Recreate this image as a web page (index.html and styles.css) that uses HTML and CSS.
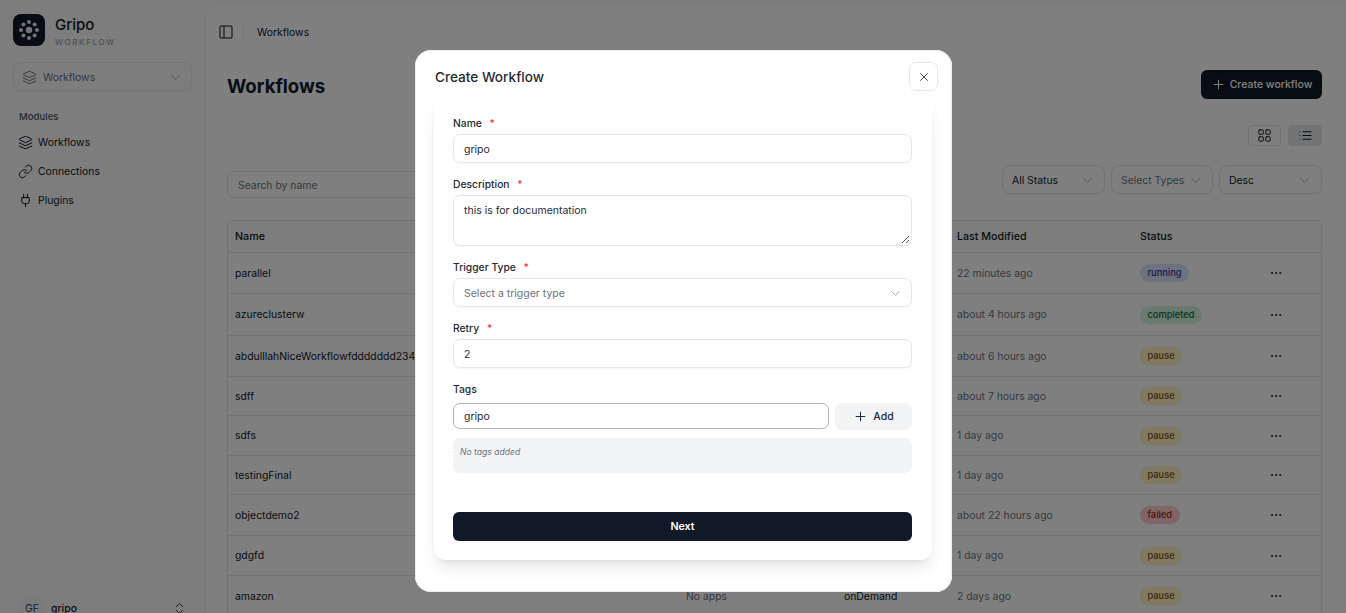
FILE: index.html
```html
<!DOCTYPE html>
<html lang="en">
  <head>
    <meta charset="UTF-8" />
    <meta name="viewport" content="width=device-width, initial-scale=1.0" />
    <link rel="stylesheet" href="styles.css">
    <title>Workflows</title>
  </head>
  <body>
    <svg class="sprite" aria-hidden="true">
      <symbol id="i-layers" viewBox="0 0 24 24"><path d="m12.83 2.18a2 2 0 0 0-1.66 0L2.6 6.08a1 1 0 0 0 0 1.83l8.58 3.91a2 2 0 0 0 1.66 0l8.58-3.9a1 1 0 0 0 0-1.83Z"/><path d="m22 17.65-9.17 4.16a2 2 0 0 1-1.66 0L2 17.65"/><path d="m22 12.65-9.17 4.16a2 2 0 0 1-1.66 0L2 12.65"/></symbol>
      <symbol id="i-link" viewBox="0 0 24 24"><path d="M10 13a5 5 0 0 0 7.54.54l3-3a5 5 0 0 0-7.07-7.07l-1.72 1.71"/><path d="M14 11a5 5 0 0 0-7.54-.54l-3 3a5 5 0 0 0 7.07 7.07l1.71-1.71"/></symbol>
      <symbol id="i-plug" viewBox="0 0 24 24"><path d="M12 22v-5"/><path d="M9 8V2"/><path d="M15 8V2"/><path d="M18 8v5a4 4 0 0 1-4 4h-4a4 4 0 0 1-4-4V8Z"/></symbol>
      <symbol id="i-panel" viewBox="0 0 24 24"><rect x="3" y="3" width="18" height="18" rx="2"/><path d="M9 3v18"/></symbol>
      <symbol id="i-grid" viewBox="0 0 24 24"><rect x="3" y="3" width="7" height="7" rx="1"/><rect x="14" y="3" width="7" height="7" rx="1"/><rect x="14" y="14" width="7" height="7" rx="1"/><rect x="3" y="14" width="7" height="7" rx="1"/></symbol>
      <symbol id="i-list" viewBox="0 0 24 24"><path d="M3 12h.01"/><path d="M3 18h.01"/><path d="M3 6h.01"/><path d="M8 12h13"/><path d="M8 18h13"/><path d="M8 6h13"/></symbol>
      <symbol id="i-plus" viewBox="0 0 24 24"><path d="M5 12h14"/><path d="M12 5v14"/></symbol>
      <symbol id="i-down" viewBox="0 0 24 24"><path d="m6 9 6 6 6-6"/></symbol>
      <symbol id="i-updown" viewBox="0 0 24 24"><path d="m7 15 5 5 5-5"/><path d="m7 9 5-5 5 5"/></symbol>
      <symbol id="i-dots" viewBox="0 0 24 24"><circle cx="12" cy="12" r="1"/><circle cx="19" cy="12" r="1"/><circle cx="5" cy="12" r="1"/></symbol>
      <symbol id="i-x" viewBox="0 0 24 24"><path d="M18 6 6 18"/><path d="m6 6 12 12"/></symbol>
    </svg>

    <div class="shell">
      <aside class="sidebar">
        <div class="brand">
          <div class="logo">
            <svg viewBox="0 0 32 32" width="32" height="32">
              <g fill="#e5e7eb">
                <circle cx="16" cy="16" r="3.2" />
                <circle cx="16" cy="8" r="2" />
                <circle cx="16" cy="24" r="2" />
                <circle cx="8" cy="16" r="2" />
                <circle cx="24" cy="16" r="2" />
                <circle cx="10.4" cy="10.4" r="2" />
                <circle cx="21.6" cy="10.4" r="2" />
                <circle cx="10.4" cy="21.6" r="2" />
                <circle cx="21.6" cy="21.6" r="2" />
              </g>
            </svg>
          </div>
          <div class="brand-text">
            <div class="brand-name">Gripo</div>
            <div class="brand-sub">WORKFLOW</div>
          </div>
        </div>
        <div class="module-select">
          <svg class="icon icon-15 muted"><use href="#i-layers" /></svg>
          <span>Workflows</span>
          <svg class="icon icon-15 chevron"><use href="#i-down" /></svg>
        </div>
        <nav class="nav">
          <p class="nav-title">Modules</p>
          <a class="nav-item"><svg class="icon icon-15"><use href="#i-layers" /></svg>Workflows</a>
          <a class="nav-item"><svg class="icon icon-15"><use href="#i-link" /></svg>Connections</a>
          <a class="nav-item"><svg class="icon icon-15"><use href="#i-plug" /></svg>Plugins</a>
        </nav>
        <div class="user">
          <span class="avatar">GF</span>
          <span class="user-name">gripo</span>
          <svg class="icon icon-15 updown"><use href="#i-updown" /></svg>
        </div>
      </aside>

      <main class="content">
        <header class="topbar">
          <svg class="icon icon-16"><use href="#i-panel" /></svg>
          <span class="topbar-sep"></span>
          <span class="crumb">Workflows</span>
        </header>
        <section class="page">
          <div class="page-head">
            <h1>Workflows</h1>
            <button class="btn-create"><svg class="icon icon-15"><use href="#i-plus" /></svg>Create workflow</button>
          </div>
          <div class="view-toggle">
            <span class="view-btn"><svg class="icon icon-15"><use href="#i-grid" /></svg></span>
            <span class="view-btn active"><svg class="icon icon-15"><use href="#i-list" /></svg></span>
          </div>
          <div class="filters">
            <div class="search">Search by name</div>
            <div class="filter-group">
              <div class="filter w-103">All Status<svg class="icon icon-15 chevron"><use href="#i-down" /></svg></div>
              <div class="filter w-102 placeholder">Select Types<svg class="icon icon-15 chevron"><use href="#i-down" /></svg></div>
              <div class="filter w-103">Desc<svg class="icon icon-15 chevron"><use href="#i-down" /></svg></div>
            </div>
          </div>
          <div class="table">
            <div class="row head h-32">
              <span class="c-name">Name</span><span class="c-apps">Apps</span><span class="c-type">Type</span><span class="c-mod">Last Modified</span><span class="c-status">Status</span>
            </div>
            <div class="row h-41">
              <span class="c-name">parallel</span><span class="c-apps soft">No apps</span><span class="c-type">onDemand</span><span class="c-mod soft">22 minutes ago</span><span class="c-status"><b class="badge running">running</b></span><svg class="icon icon-14"><use href="#i-dots" /></svg>
            </div>
            <div class="row h-42">
              <span class="c-name">azureclusterw</span><span class="c-apps soft">No apps</span><span class="c-type">onDemand</span><span class="c-mod soft">about 4 hours ago</span><span class="c-status"><b class="badge completed">completed</b></span><svg class="icon icon-14"><use href="#i-dots" /></svg>
            </div>
            <div class="row h-41">
              <span class="c-name">abdulllahNiceWorkflowfddddddd234</span><span class="c-apps soft">No apps</span><span class="c-type">onDemand</span><span class="c-mod soft">about 6 hours ago</span><span class="c-status"><b class="badge pause">pause</b></span><svg class="icon icon-14"><use href="#i-dots" /></svg>
            </div>
            <div class="row h-39">
              <span class="c-name">sdff</span><span class="c-apps soft">No apps</span><span class="c-type">onDemand</span><span class="c-mod soft">about 7 hours ago</span><span class="c-status"><b class="badge pause">pause</b></span><svg class="icon icon-14"><use href="#i-dots" /></svg>
            </div>
            <div class="row h-40">
              <span class="c-name">sdfs</span><span class="c-apps soft">No apps</span><span class="c-type">onDemand</span><span class="c-mod soft">1 day ago</span><span class="c-status"><b class="badge pause">pause</b></span><svg class="icon icon-14"><use href="#i-dots" /></svg>
            </div>
            <div class="row h-39">
              <span class="c-name">testingFinal</span><span class="c-apps soft">No apps</span><span class="c-type">onDemand</span><span class="c-mod soft">1 day ago</span><span class="c-status"><b class="badge pause">pause</b></span><svg class="icon icon-14"><use href="#i-dots" /></svg>
            </div>
            <div class="row h-41">
              <span class="c-name">objectdemo2</span><span class="c-apps soft">No apps</span><span class="c-type">onDemand</span><span class="c-mod soft">about 22 hours ago</span><span class="c-status"><b class="badge failed">failed</b></span><svg class="icon icon-14"><use href="#i-dots" /></svg>
            </div>
            <div class="row h-40">
              <span class="c-name">gdgfd</span><span class="c-apps soft">No apps</span><span class="c-type">onDemand</span><span class="c-mod soft">1 day ago</span><span class="c-status"><b class="badge pause">pause</b></span><svg class="icon icon-14"><use href="#i-dots" /></svg>
            </div>
            <div class="row h-41">
              <span class="c-name">amazon</span><span class="c-apps soft">No apps</span><span class="c-type">onDemand</span><span class="c-mod soft">2 days ago</span><span class="c-status"><b class="badge pause">pause</b></span><svg class="icon icon-14"><use href="#i-dots" /></svg>
            </div>
          </div>
        </section>
      </main>
    </div>

    <div class="overlay"></div>
    <div class="modal">
      <div class="modal-head">
        <h2>Create Workflow</h2>
        <button class="modal-close"><svg class="icon icon-14"><use href="#i-x" /></svg></button>
      </div>
      <form class="card">
        <div class="field">
          <label>Name <em>*</em></label>
          <div class="input">gripo</div>
        </div>
        <div class="field">
          <label>Description <em>*</em></label>
          <div class="input textarea">this is for documentation
            <svg class="grip" width="9" height="9" viewBox="0 0 9 9"><path d="M1 8 8 1M5 8l3-3" stroke="#555" fill="none" /></svg>
          </div>
        </div>
        <div class="field">
          <label>Trigger Type <em>*</em></label>
          <div class="input select">Select a trigger type<svg class="icon icon-15 chevron"><use href="#i-down" /></svg></div>
        </div>
        <div class="field">
          <label>Retry <em>*</em></label>
          <div class="input">2</div>
        </div>
        <div class="field tags">
          <label>Tags</label>
          <div class="tag-row">
            <div class="input focus">gripo</div>
            <button type="button" class="btn-add"><svg class="icon icon-15"><use href="#i-plus" /></svg>Add</button>
          </div>
          <div class="tag-box">No tags added</div>
        </div>
        <button type="button" class="btn-next">Next</button>
      </form>
    </div>
  </body>
</html>
```

FILE: styles.css
```css
* {
  margin: 0;
  padding: 0;
  box-sizing: border-box;
}

html,
body {
  height: 100%;
  overflow: hidden;
}

body {
  font-family: Inter, "Noto Sans", sans-serif;
  font-size: 10.4px;
  color: #111827;
  background: #fafafa;
}

.sprite {
  display: none;
}

.icon {
  fill: none;
  stroke: currentColor;
  stroke-width: 1.6;
  stroke-linecap: round;
  stroke-linejoin: round;
  flex-shrink: 0;
}

.icon-14 { width: 14px; height: 14px; }
.icon-15 { width: 15px; height: 15px; }
.icon-16 { width: 16px; height: 16px; }

.muted { color: #6b7280; }
.chevron { color: #a8acb3; margin-left: auto; }

/* LAYOUT */
.shell {
  display: flex;
  height: 630px;
  padding-top: 6px;
}

.sidebar {
  width: 205px;
  flex-shrink: 0;
  margin-top: -6px;
  padding: 14px 13px 0;
  display: flex;
  flex-direction: column;
}

.content {
  flex: 1;
  margin-right: 2px;
  background: #fff;
  border-left: 1px solid #f0f0f0;
  border-top-left-radius: 12px;
}

/* SIDEBAR */
.brand {
  display: flex;
  gap: 10px;
  height: 32px;
}

.logo {
  width: 32px;
  height: 32px;
  background: #111827;
  border-radius: 8px;
}

.brand-name {
  font-size: 15px;
  font-weight: 500;
  line-height: 19px;
  margin-top: 1px;
}

.brand-sub {
  font-size: 8px;
  font-weight: 500;
  letter-spacing: 1.6px;
  line-height: 10px;
  margin-top: 3px;
  color: #9ca3af;
}

.module-select {
  height: 29px;
  margin-top: 16px;
  padding: 1px 8px 0;
  display: flex;
  align-items: center;
  gap: 6px;
  color: #6b7280;
  background: #fafafa;
  border: 1px solid #eaeaea;
  border-radius: 8px;
  box-shadow: 0 1px 2px rgba(0, 0, 0, 0.04);
}

.nav {
  flex: 1;
  margin-top: 20px;
  padding-left: 5px;
}

.nav-title {
  font-size: 9.6px;
  font-weight: 500;
  line-height: 12px;
  padding-left: 1px;
  color: #4b5563;
  margin-bottom: 5px;
}

.nav-item {
  height: 29px;
  display: flex;
  align-items: center;
  gap: 5px;
}

.user {
  height: 44px;
  display: flex;
  align-items: center;
  gap: 6px;
  padding: 0 5px 0 6px;
}

.avatar {
  width: 26px;
  height: 26px;
  border-radius: 50%;
  background: #f3f4f6;
  color: #374151;
  display: flex;
  align-items: center;
  justify-content: center;
}

.user-name {
  font-weight: 500;
  flex: 1;
}

.updown {
  color: #374151;
}

/* TOP */
.topbar {
  height: 52px;
  padding-left: 12px;
  display: flex;
  align-items: center;
}

.topbar-sep {
  width: 1px;
  height: 12px;
  background: #e5e7eb;
  margin: 0 13px 0 9px;
}

.page {
  padding: 12px 22px 0 21px;
}

.page-head {
  display: flex;
  align-items: flex-start;
  justify-content: space-between;
  height: 55px;
}

h1 {
  font-size: 18.6px;
  font-weight: 700;
  line-height: 30px;
  margin-top: 1px;
}

.btn-create {
  width: 121px;
  height: 29px;
  border: none;
  background: #111827;
  color: #fff;
  border-radius: 6px;
  font: 500 10.5px Inter, sans-serif;
  display: flex;
  align-items: center;
  justify-content: center;
  gap: 4px;
}

.view-toggle {
  display: flex;
  justify-content: flex-end;
  gap: 7px;
}

.view-btn {
  width: 33px;
  height: 21px;
  display: flex;
  align-items: center;
  justify-content: center;
  border: 1px solid #e5e7eb;
  border-radius: 4px;
}

.view-btn.active {
  width: 34px;
  background: #e5e7eb;
  border-color: #e5e7eb;
}

.filters {
  display: flex;
  justify-content: space-between;
  margin-top: 19px;
  height: 35px;
}

.search {
  width: 300px;
  height: 27px;
  margin-top: 6px;
  padding: 2px 0 0 10px;
  display: flex;
  align-items: center;
  color: #6b7280;
  border: 1px solid #e5e7eb;
  border-radius: 8px;
}

.filter-group {
  display: flex;
  gap: 6px;
}

.filter {
  height: 29px;
  padding: 1px 9px 0;
  display: flex;
  align-items: center;
  white-space: nowrap;
  border: 1px solid #e5e7eb;
  border-radius: 8px;
  box-shadow: 0 1px 2px rgba(0, 0, 0, 0.04);
}

.w-102 { width: 102px; }
.w-103 { width: 103px; }
.placeholder { color: #6b7280; }

/* TABLE */
.table {
  margin-top: 20px;
  border: 1px solid #e5e7eb;
  border-radius: 4px 4px 0 0;
}

.row {
  display: flex;
  align-items: center;
  padding-left: 7px;
  border-bottom: 1px solid #e5e7eb;
}

.head {
  font-weight: 500;
  font-size: 10.7px;
  background: #fafafa;
}

.h-32 { height: 32px; }
.h-39 { height: 39px; }
.h-40 { height: 40px; }
.h-41 { height: 41px; }
.h-42 { height: 42px; }

.c-name { width: 451px; white-space: nowrap; overflow: hidden; }
.c-apps { width: 158px; }
.c-type { width: 113px; }
.c-mod { width: 183px; }
.c-status { width: 129px; }

.soft { color: #6b7280; }

.badge {
  display: inline-block;
  font-size: 9.3px;
  font-weight: 500;
  line-height: 18px;
  padding: 0 7.5px;
  border-radius: 9px;
}

.running { background: #dbe4ff; color: #3730a3; }
.completed { background: #d5f5e0; color: #166534; }
.pause { background: #fef3c0; color: #854d0e; }
.failed { background: #fecaca; color: #991b1b; }

/* MODAL */
.overlay {
  position: fixed;
  inset: 0;
  background: rgba(0, 0, 0, 0.5);
}

.modal {
  position: fixed;
  left: 415px;
  top: 50px;
  width: 537px;
  height: 542px;
  padding: 12px 14px 0 19px;
  background: #fff;
  border-radius: 16px;
  box-shadow: inset 0 0 0 1px #eeeef0;
}

.modal-head {
  display: flex;
  align-items: center;
  justify-content: space-between;
  height: 29px;
}

h2 {
  font-size: 13.6px;
  font-weight: 500;
  margin-left: 1px;
  color: #1f2937;
}

.modal-close {
  width: 29px;
  height: 29px;
  display: flex;
  align-items: center;
  justify-content: center;
  background: #fff;
  color: #374151;
  border: 1px solid #e5e7eb;
  border-radius: 7px;
}

.card {
  width: 498px;
  height: 463px;
  margin-top: 6px;
  padding: 19px 20px 0 19px;
  background: #fff;
  border-radius: 12px;
  box-shadow: 0 10px 15px -3px rgba(0, 0, 0, 0.1), 0 4px 6px -4px rgba(0, 0, 0, 0.1);
}

.field {
  margin-bottom: 14px;
}

.field label {
  display: block;
  font-size: 10.3px;
  font-weight: 500;
  line-height: 14px;
  margin-bottom: 4px;
  color: #1f2937;
}

.field em {
  font-style: normal;
  color: #ef4444;
  margin-left: 5px;
}

.input {
  position: relative;
  height: 29px;
  padding: 1px 8px 0 10px;
  display: flex;
  align-items: center;
  font-size: 10.5px;
  color: #1f2937;
  background: #fff;
  border: 1px solid #e5e7eb;
  border-radius: 7px;
  box-shadow: 0 1px 2px rgba(0, 0, 0, 0.04);
}

.textarea {
  height: 51px;
  padding-top: 8px;
  align-items: flex-start;
}

.grip {
  position: absolute;
  right: 1px;
  bottom: 1px;
}

.select {
  color: #6b7280;
}

.tags label {
  margin-bottom: 7px;
}

.tag-row {
  display: flex;
  gap: 6px;
}

.focus {
  flex: 1;
  height: 26px;
  border-color: #b4b4ba;
}

.btn-add {
  width: 77px;
  height: 27px;
  border: none;
  background: #f3f4f6;
  color: #1f2937;
  border-radius: 7px;
  font: 500 10.5px Inter, sans-serif;
  display: flex;
  align-items: center;
  justify-content: center;
  gap: 5px;
}

.tag-box {
  height: 35px;
  margin-top: 8px;
  padding: 9px 7px;
  background: #f3f4f6;
  border-radius: 7px;
  font-size: 8.6px;
  font-style: italic;
  line-height: 10px;
  color: #6b7280;
}

.btn-next {
  display: block;
  width: 459px;
  height: 29px;
  margin-top: 39px;
  padding-bottom: 1px;
  border: none;
  background: #111827;
  color: #fff;
  border-radius: 6px;
  font: 600 10.7px Inter, sans-serif;
}
```
